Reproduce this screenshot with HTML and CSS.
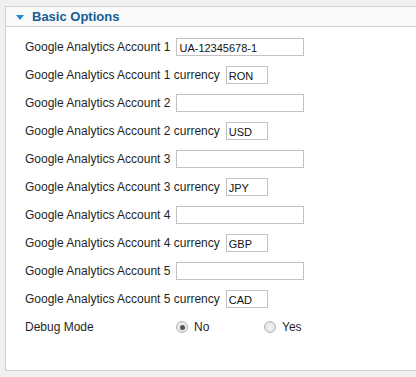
FILE: index.html
```html
<!DOCTYPE html>
<html>
<head>
<meta charset="utf-8">
<link rel="stylesheet" href="styles.css">
</head>
<body>
<div class="panel">
  <div class="panel-head">
    <span class="tri"></span>
    <span class="title">Basic Options</span>
  </div>
  <div class="panel-body">
    <div class="row"><label>Google Analytics Account 1</label><input class="txt long" value="UA-12345678-1"></div>
    <div class="row"><label>Google Analytics Account 1 currency</label><input class="txt short" value="RON"></div>
    <div class="row"><label>Google Analytics Account 2</label><input class="txt long" value=""></div>
    <div class="row"><label>Google Analytics Account 2 currency</label><input class="txt short" value="USD"></div>
    <div class="row"><label>Google Analytics Account 3</label><input class="txt long" value=""></div>
    <div class="row"><label>Google Analytics Account 3 currency</label><input class="txt short" value="JPY"></div>
    <div class="row"><label>Google Analytics Account 4</label><input class="txt long" value=""></div>
    <div class="row"><label>Google Analytics Account 4 currency</label><input class="txt short" value="GBP"></div>
    <div class="row"><label>Google Analytics Account 5</label><input class="txt long" value=""></div>
    <div class="row"><label>Google Analytics Account 5 currency</label><input class="txt short" value="CAD"></div>
    <div class="row">
      <label class="fixed">Debug Mode</label>
      <span class="opt"><input type="radio" name="dbg" class="rad" checked><span>No</span></span>
      <span class="opt"><input type="radio" name="dbg" class="rad"><span>Yes</span></span>
    </div>
  </div>
</div>
</body>
</html>
```
FILE: styles.css
```css
html, body {
  margin: 0;
  padding: 0;
  background: #f0f0f0;
  overflow: hidden;
  font-family: "Liberation Sans", Arial, sans-serif;
  font-size: 12px;
  color: #1f1f1f;
}
.panel {
  margin: 6px 0 0 5px;
  background: #fff;
  border: 1px solid #cfcfcf;
  border-right: none;
}
.panel-head {
  height: 19px;
  background: #fafafa;
  border-bottom: 1px solid #cfcfcf;
  display: flex;
  align-items: center;
  padding-left: 10px;
}
.tri {
  width: 0;
  height: 0;
  border-left: 4px solid transparent;
  border-right: 4px solid transparent;
  border-top: 5px solid #1d8cd0;
  margin-right: 8px;
  margin-top: 1px;
}
.title {
  font-weight: bold;
  font-size: 13px;
  color: #175c96;
}
.panel-body {
  padding: 6px 0 29px 19px;
}
.row {
  height: 28px;
  display: flex;
  align-items: center;
}
.row label {
  margin-right: 6px;
}
.txt {
  box-sizing: border-box;
  height: 18px;
  border: 1px solid #c2c2c2;
  font-family: "Liberation Sans", Arial, sans-serif;
  font-size: 11px;
  color: #111;
  padding: 1px 2px 0;
  margin: 0;
  outline: none;
}
.long { width: 128px; }
.short { width: 42px; }
.fixed {
  width: 150px;
  margin-right: 0 !important;
}
.opt {
  display: flex;
  align-items: center;
  width: 88px;
}
.rad {
  appearance: none;
  -webkit-appearance: none;
  width: 12px;
  height: 12px;
  margin: 0 6px 0 1px;
  border-radius: 50%;
  border: 1px solid #b4b4b4;
  background: radial-gradient(circle, #f4f4f4 0, #dedede 100%);
  box-sizing: border-box;
  position: relative;
}
.rad:checked::after {
  content: "";
  position: absolute;
  left: 2.5px;
  top: 2.5px;
  width: 5px;
  height: 5px;
  border-radius: 50%;
  background: #555;
}
```
